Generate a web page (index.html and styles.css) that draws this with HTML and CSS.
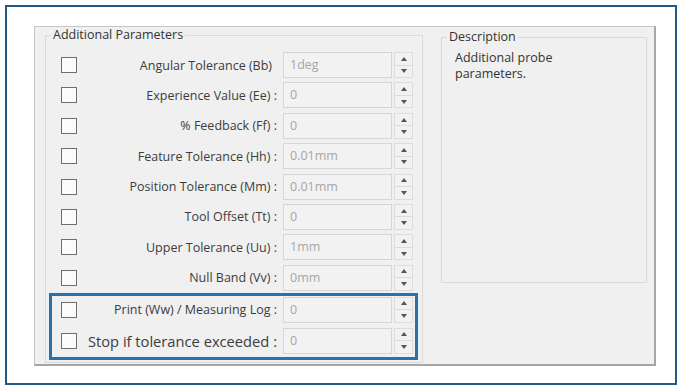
FILE: index.html
```html
<!DOCTYPE html>
<html lang="en">
<head>
  <meta charset="UTF-8" />
  <title>Additional Parameters</title>
  <link rel="stylesheet" href="styles.css">
</head>
<body>

  <div class="frame">
    <div class="panel">

      <div class="group params">
        <span class="group-title">Additional Parameters</span>

        <div class="rows">
          <div class="row">
            <span class="check"></span>
            <span class="label nocolon">Angular Tolerance (Bb)</span>
            <span class="field">1deg</span>
            <span class="spin"><i class="up"></i><i class="down"></i></span>
          </div>
          <div class="row">
            <span class="check"></span>
            <span class="label">Experience Value (Ee) :</span>
            <span class="field">0</span>
            <span class="spin"><i class="up"></i><i class="down"></i></span>
          </div>
          <div class="row">
            <span class="check"></span>
            <span class="label">% Feedback (Ff) :</span>
            <span class="field">0</span>
            <span class="spin"><i class="up"></i><i class="down"></i></span>
          </div>
          <div class="row">
            <span class="check"></span>
            <span class="label">Feature Tolerance (Hh) :</span>
            <span class="field">0.01mm</span>
            <span class="spin"><i class="up"></i><i class="down"></i></span>
          </div>
          <div class="row">
            <span class="check"></span>
            <span class="label">Position Tolerance (Mm) :</span>
            <span class="field">0.01mm</span>
            <span class="spin"><i class="up"></i><i class="down"></i></span>
          </div>
          <div class="row">
            <span class="check"></span>
            <span class="label">Tool Offset (Tt) :</span>
            <span class="field">0</span>
            <span class="spin"><i class="up"></i><i class="down"></i></span>
          </div>
          <div class="row">
            <span class="check"></span>
            <span class="label">Upper Tolerance (Uu) :</span>
            <span class="field">1mm</span>
            <span class="spin"><i class="up"></i><i class="down"></i></span>
          </div>
          <div class="row">
            <span class="check"></span>
            <span class="label">Null Band (Vv) :</span>
            <span class="field">0mm</span>
            <span class="spin"><i class="up"></i><i class="down"></i></span>
          </div>
        </div>

        <div class="highlight">
          <div class="row">
            <span class="check"></span>
            <span class="label">Print (Ww) / Measuring Log :</span>
            <span class="field">0</span>
            <span class="spin"><i class="up"></i><i class="down"></i></span>
          </div>
          <div class="row">
            <span class="check"></span>
            <span class="label big">Stop if tolerance exceeded :</span>
            <span class="field">0</span>
            <span class="spin"><i class="up"></i><i class="down"></i></span>
          </div>
        </div>
      </div>

      <div class="group description">
        <span class="group-title">Description</span>
        <p>Additional probe<br>parameters.</p>
      </div>

    </div>
  </div>

</body>
</html>
```

FILE: styles.css
```css
body {
  margin: 0;
  background: #ffffff;
  font-family: 'Open Sans', 'Noto Sans', sans-serif;
  color: #3a3a3a;
}

.frame {
  margin: 5px;
  width: 672px;
  height: 380px;
  box-sizing: border-box;
  border: 2px solid #22598a;
  padding: 19px 0 0 27px;
}

.panel {
  width: 622px;
  height: 340px;
  box-sizing: border-box;
  background: #f0f0f0;
  border-top: 1px solid #c6c6c6;
  border-left: 1px solid #c6c6c6;
  border-right: 2px solid #a6a6a6;
  border-bottom: 2px solid #a6a6a6;
  display: flex;
  align-items: flex-start;
  padding: 8px 0 0 10px;
}

.group {
  position: relative;
  border: 1px solid #dadada;
  box-sizing: border-box;
}

.group-title {
  position: absolute;
  top: -9px;
  left: 5px;
  padding: 0 2px;
  background: #f0f0f0;
  font-size: 12.5px;
  line-height: 16px;
  color: #333;
}

.params {
  width: 378px;
  height: 328px;
  padding-top: 16px;
}

.rows {
  display: flex;
  flex-direction: column;
  gap: 4.4px;
  padding: 0 9px 0 15px;
}

.row {
  display: flex;
  align-items: center;
  height: 26px;
}

.check {
  width: 16px;
  height: 16px;
  box-sizing: border-box;
  border: 1px solid #6e6e6e;
  background: #fbfbfb;
}

.label {
  flex: 1;
  text-align: right;
  padding-right: 6px;
  font-size: 12.5px;
  white-space: nowrap;
  color: #3c3c3c;
}

.label.nocolon {
  padding-right: 11px;
}

.label.big {
  font-size: 14.7px;
}

.field {
  width: 109px;
  height: 26px;
  box-sizing: border-box;
  border: 1px solid #d6d6d6;
  background: #f2f2f2;
  color: #a6a6a6;
  font-size: 12.5px;
  line-height: 24px;
  padding-left: 6px;
}

.spin {
  width: 19px;
  height: 26px;
  margin-left: 2px;
  display: flex;
  flex-direction: column;
}

.spin i {
  flex: 1;
  border: 1px solid #dcdcdc;
  background: #f2f2f2;
  position: relative;
}

.spin i + i {
  border-top: none;
}

.spin i::after {
  content: "";
  position: absolute;
  left: 50%;
  top: 50%;
  margin-left: -3px;
  border-left: 3px solid transparent;
  border-right: 3px solid transparent;
}

.spin .up::after {
  margin-top: -2px;
  border-bottom: 4px solid #555;
}

.spin .down::after {
  margin-top: -2px;
  border-top: 4px solid #555;
}

.highlight {
  margin: 2px 4px 0 3px;
  border: 3px solid #2a70aa;
  padding: 1px 2px 3px 9px;
  display: flex;
  flex-direction: column;
  gap: 5px;
}

.description {
  width: 206px;
  height: 246px;
  margin: 2px 0 0 18px;
}

.description p {
  margin: 12px 0 0 13px;
  font-size: 12.5px;
  line-height: 16px;
  color: #333;
}
```
